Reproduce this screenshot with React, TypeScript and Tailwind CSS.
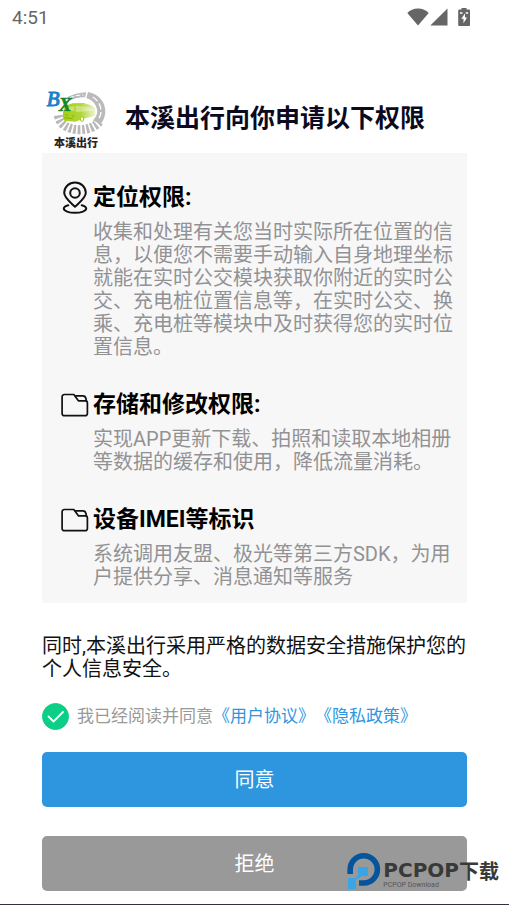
import React, { useState } from 'react';

interface Permission {
  id: string;
  icon: 'location' | 'folder';
  title: string;
  description: string;
}

const permissions: Permission[] = [
  {
    id: 'location',
    icon: 'location',
    title: '定位权限:',
    description:
      '收集和处理有关您当时实际所在位置的信息，以便您不需要手动输入自身地理坐标就能在实时公交模块获取你附近的实时公交、充电桩位置信息等，在实时公交、换乘、充电桩等模块中及时获得您的实时位置信息。',
  },
  {
    id: 'storage',
    icon: 'folder',
    title: '存储和修改权限:',
    description: '实现APP更新下载、拍照和读取本地相册等数据的缓存和使用，降低流量消耗。',
  },
  {
    id: 'device',
    icon: 'folder',
    title: '设备IMEI等标识',
    description: '系统调用友盟、极光等第三方SDK，为用户提供分享、消息通知等服务',
  },
];

const LocationIcon = () => (
  <svg viewBox="0 0 26 34" className="h-[34px] w-[26px]" fill="none" stroke="#111" strokeWidth="2" aria-hidden="true">
    <path d="M13 25.800C9 21.800 2.200 17 2.200 11.800a10.800 10.200 0 0 1 21.600 0c0 5.200-6.800 10-10.800 14z" strokeLinejoin="round" />
    <circle cx="13" cy="12" r="4.800" />
    <path d="M6.300 24.200C3.300 25 1.800 26.200 1.800 27.600c0 2.300 4.900 4.200 11.200 4.200s11.200-1.900 11.200-4.200c0-1.400-1.500-2.600-4.500-3.400" strokeLinecap="round" />
  </svg>
);

const FolderIcon = () => (
  <svg viewBox="0 0 28 24" className="h-6 w-7" fill="none" stroke="#111" strokeWidth="1.700" strokeLinejoin="round" aria-hidden="true">
    <path d="M3.500 1.500h9.300l4.600 6.300h6.800a2.200 2.200 0 0 1 2.200 2.200v10.500a2.200 2.200 0 0 1-2.200 2.200H3.300a2.200 2.200 0 0 1-2.200-2.200V3.700a2.200 2.200 0 0 1 2.400-2.200z" />
    <path d="M13.800 2.800h8a3 3 0 0 1 3 2.500l.8 3.300" />
  </svg>
);

const StatusBar = () => (
  <div className="flex h-[34px] items-center justify-between pl-3 pr-[38px] text-[#666]">
    <span className="pt-px font-[Roboto] text-[19px] leading-6">4:51</span>
    <div className="flex items-center">
      <svg viewBox="0 0 22 18" className="h-[18px] w-[22px]" fill="currentColor" aria-hidden="true">
        <path d="M11 17.500.300 5C3 2 6.500.500 11 .500S19 2 21.700 5z" />
      </svg>
      <svg viewBox="0 0 18 18" className="ml-px h-[18px] w-[18px]" fill="currentColor" aria-hidden="true">
        <path d="M17.500.500v17H.300z" />
      </svg>
      <svg viewBox="0 0 14 18" className="ml-[9px] h-[18px] w-[14px]" aria-hidden="true">
        <path d="M4.500 0h5v1.500H12a1 1 0 0 1 1 1V17a1 1 0 0 1-1 1H2.200a1 1 0 0 1-1-1V2.500a1 1 0 0 1 1-1h2.300z" fill="currentColor" />
        <path d="M3 4.200h2.500v1.600H3zM8.700 4.200h2.500v1.600H8.700z" fill="#fff" />
        <path d="M8 5.500 4.200 10.700h2.300v4.500L10 9.500H8z" fill="#fff" />
      </svg>
    </div>
  </div>
);

const BrandLogo = () => (
  <div className="flex w-[68px] flex-col items-center">
    <svg viewBox="22 18 198 150" className="h-[50px] w-[66px] overflow-visible" aria-hidden="true">
      <defs>
        <linearGradient id="bus" x1="0" x2="1">
          <stop offset="0" stopColor="#a5cf13" />
          <stop offset="0.550" stopColor="#b1d53b" />
          <stop offset="1" stopColor="#eef5d2" />
        </linearGradient>
      </defs>
      <path d="M68 106c4 28 32 43 62 43 27 0 48-8 61-24" fill="none" stroke="#b8b8b8" strokeWidth="27" strokeDasharray="8 5" />
      <path d="M92 54C110 42 132 38 152 37l-4 15c-18-1-33 3-45 10z" fill="#bbb" />
      <path d="M157 36c32 5 53 31 52 60-1 15-6 27-15 37l-22-12c10-10 15-21 12-33-4-18-14-28-32-34z" fill="#bababa" />
      <path d="M171 51c15 9 25 25 25 41 0 10-3 19-8 27" fill="none" stroke="#fff" strokeWidth="4" strokeDasharray="19 8" />
      <path d="M103 54c12-7 26-9 40-9" fill="none" stroke="#fff" strokeWidth="3" strokeDasharray="13 6" />
      {/* Bus */}
      <path d="M82 98l6-20 22-8 34-1q30 6 35 18v20l-38 10-22 8-33-3q-6-9-4-24z" fill="url(#bus)" />
      <path d="M120 77q40 2 54 12v3l-54 4z" fill="#fff" opacity=".35" />
      <path d="M90 83l26-5v14l-29 4z" fill="#cbe26f" />
      <ellipse cx="139" cy="117" rx="5" ry="7" fill="#fff" stroke="#9dc717" strokeWidth="3" />
      <path d="M86 113l26 3M89 105h8M109 108h7" stroke="#84b316" strokeWidth="3" />
      <text x="33" y="78" fontFamily="Liberation Serif" fontSize="63" fontStyle="italic" fill="#1680cb" stroke="#1680cb" strokeWidth="3">B</text>
      <text x="70" y="92" fontFamily="Liberation Serif" fontSize="56" fontStyle="italic" fontWeight="bold" fill="#17832b" stroke="#17832b" strokeWidth="2">X</text>
    </svg>
    <span className="text-[11px] font-black leading-4 text-[#292321]">本溪出行</span>
  </div>
);

const Watermark = () => (
  <div className="pointer-events-none absolute right-[10px] bottom-[15px] flex items-end font-bold text-[#393939]">
    <svg viewBox="0 0 34 38" className="mr-[2px] h-[38px] w-[34px]" aria-hidden="true">
      <path d="M3.200 22v-4.500A13.600 13.600 0 1 1 16.800 31H12" fill="none" stroke="#05549c" strokeWidth="5.600" />
      <path d="M11 15h10v9h-6l-6 4v9H1V26h8l2-3z" fill="#37a5e6" />
    </svg>
    <div className="flex flex-col">
      <span className="font-['DejaVu_Sans',sans-serif] text-[20px] leading-5">PCPOP</span>
      <span className="font-[Roboto] text-[7px] font-normal leading-[10px] text-[#555]">PCPOP Download</span>
    </div>
    <span className="pb-1 text-[20px] leading-7">下载</span>
  </div>
);

const App = () => {
  const [agreed, setAgreed] = useState(true);

  return (
    <div className="relative flex min-h-screen flex-col bg-white font-[Roboto,'Noto_Sans_CJK_SC',sans-serif]">
      <StatusBar />

      <main className="flex grow flex-col px-[42px] pt-[52px]">
        <header className="flex items-center gap-[15px] pb-px">
          <BrandLogo />
          <h1 className="whitespace-nowrap text-[25px] font-bold leading-8 text-[#0b0a1e]">本溪出行向你申请以下权限</h1>
        </header>

        {/* Permission list */}
        <section className="flex flex-col gap-[29px] bg-[#f7f7f7] pt-7 pr-3 pb-[14px] pl-[19px]">
          {permissions.map((permission) => (
            <article key={permission.id} className="flex gap-1">
              <div className="flex h-[34px] w-7 shrink-0 items-center justify-center">
                {permission.icon === 'location' ? <LocationIcon /> : <FolderIcon />}
              </div>
              <div className="flex flex-col gap-[6px]">
                <h2 className="text-[23px] font-bold leading-[34px] text-black">{permission.title}</h2>
                <p className="text-[20px] leading-[23px] text-[#929295]">{permission.description}</p>
              </div>
            </article>
          ))}
        </section>

        <p className="pt-8 text-[20px] leading-[23px] text-[#111]">
          同时,本溪出行采用严格的数据安全措施保护您的个人信息安全。
        </p>

        <div className="flex items-center pt-[22px] text-[17px] leading-[27px]">
          <span className="grid shrink-0">
            <input
              id="agree"
              type="checkbox"
              checked={agreed}
              onChange={(e) => setAgreed(e.target.checked)}
              className="col-start-1 row-start-1 size-[27px] appearance-none rounded-full border border-gray-300 checked:border-[#0bce87] checked:bg-[#0bce87]"
            />
            {agreed && (
              <svg viewBox="0 0 27 27" className="pointer-events-none col-start-1 row-start-1 size-[27px]" fill="none" stroke="#fff" strokeWidth="1.800" aria-hidden="true">
                <path d="m6.500 13.500 5 5L21 9" strokeLinecap="round" strokeLinejoin="round" />
              </svg>
            )}
          </span>
          <label htmlFor="agree" className="pl-2 text-[#999]">我已经阅读并同意</label>
          <a href="#terms" className="text-[#2e96df]">《用户协议》</a>
          <a href="#privacy" className="text-[#2e96df]">《隐私政策》</a>
        </div>

        <div className="flex flex-col gap-[29px] pt-[22px] pb-[13px] text-[20px] text-white">
          <button type="button" className="h-[55px] rounded-[5px] bg-[#2e96df]">同意</button>
          <button type="button" className="h-[55px] rounded-[5px] bg-[#999]">拒绝</button>
        </div>
      </main>

      <div className="h-px bg-[#33323c]" />
      <Watermark />
    </div>
  );
};

export default App;
